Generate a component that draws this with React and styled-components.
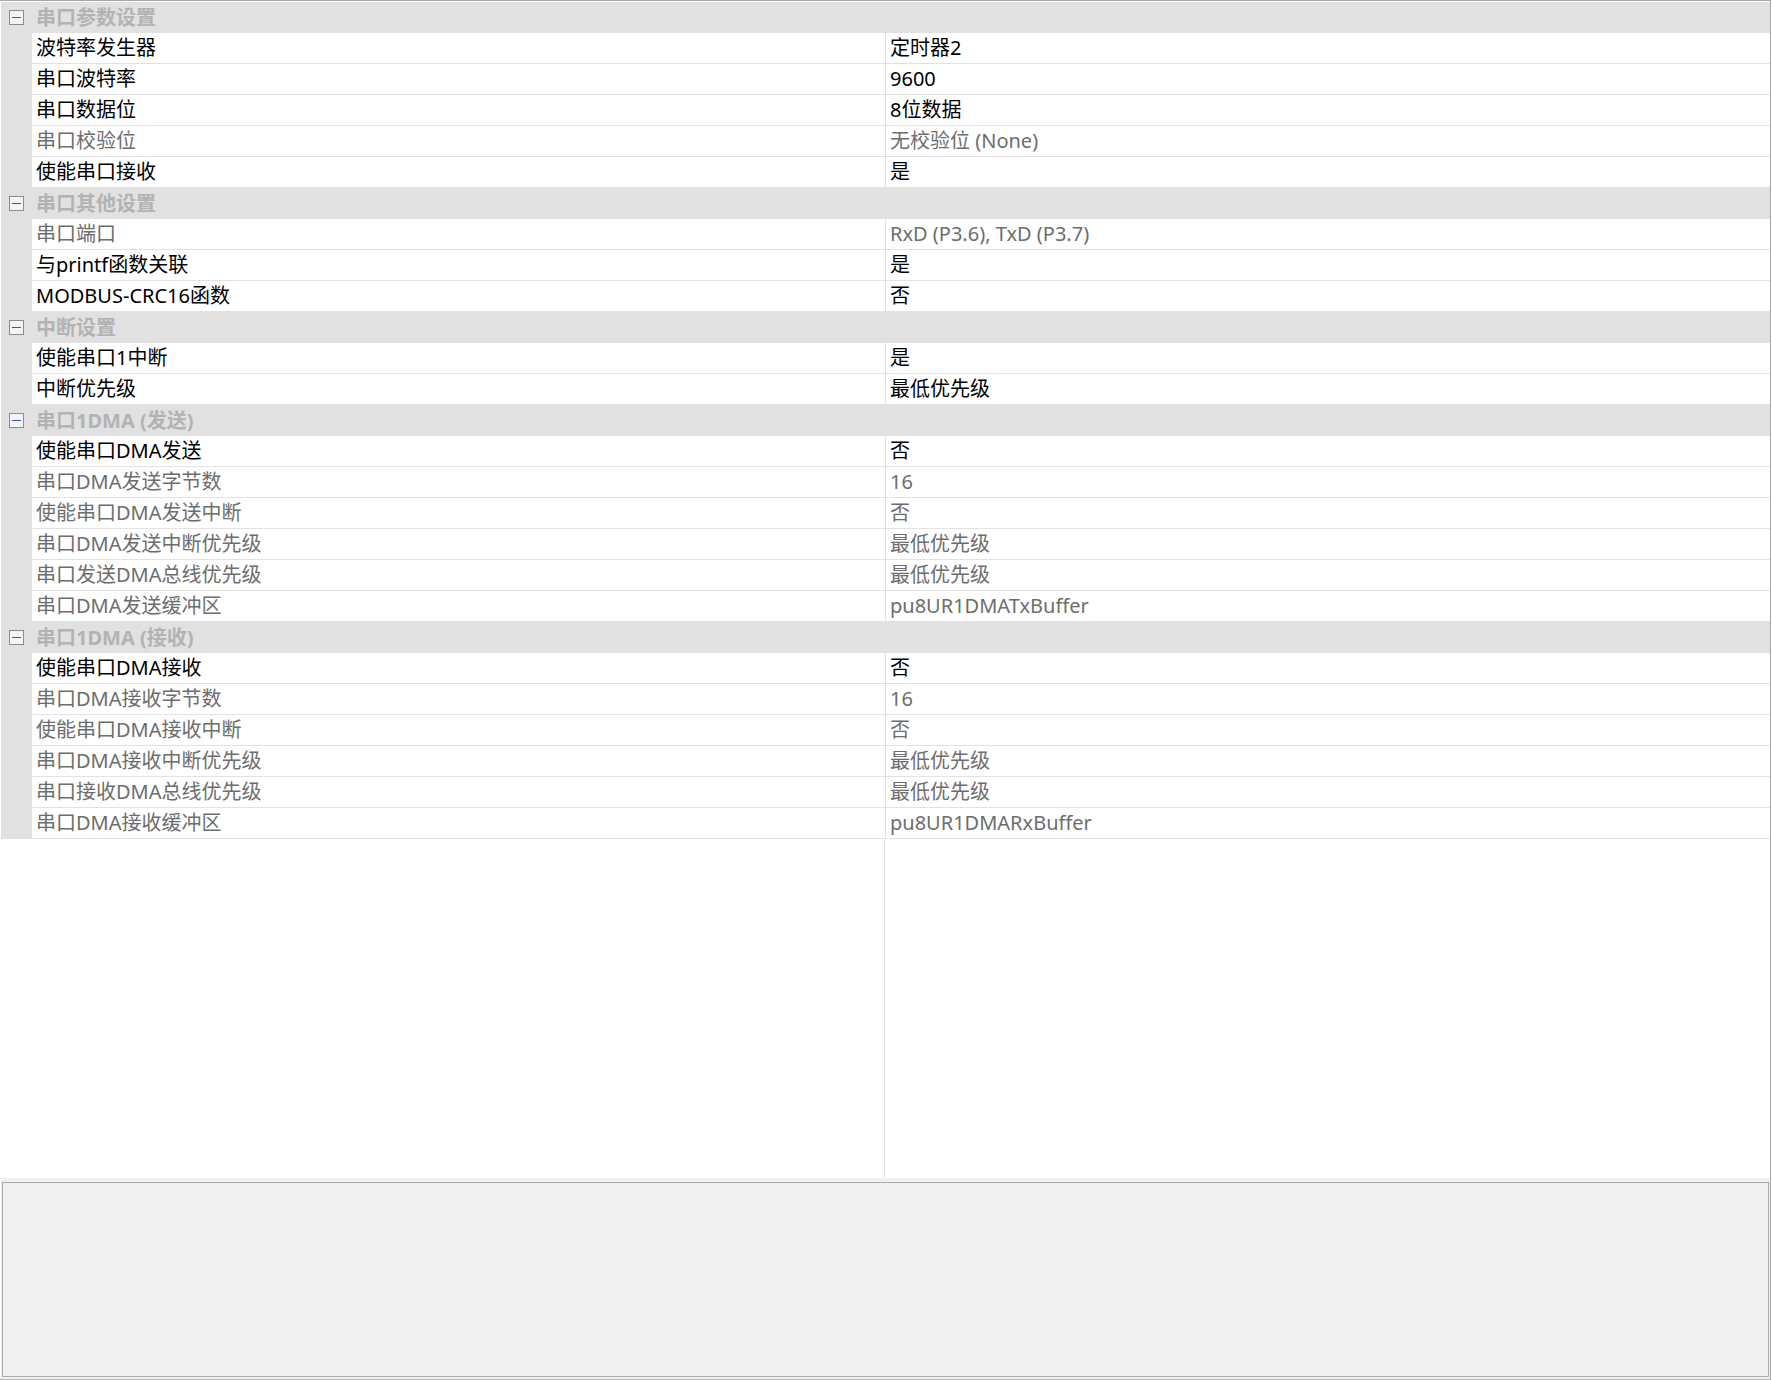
import React from "react"
import styled, { createGlobalStyle } from "styled-components"

const Global = createGlobalStyle`
html, body {
  margin: 0;
  padding: 0;
  background: #ffffff;
}
`

const Frame = styled.div`
width: 1771px;
height: 1380px;
box-sizing: border-box;
border-top: 1px solid #a8a8a8;
border-right: 1px solid #a8a8a8;
border-bottom: 1px solid #b4b4b4;
padding: 1px 0 0 1px;
display: flex;
flex-direction: column;
font-family: "Noto Sans", "Noto Sans CJK SC", sans-serif;
font-size: 20px;
`

const Grid = styled.div`
flex: 1;
display: flex;
flex-direction: column;
`

const GroupRow = styled.div`
height: 31px;
display: flex;
align-items: center;
background: #e1e1e1;
`

const Toggle = styled.span`
width: 15px;
height: 15px;
box-sizing: border-box;
margin: 0 12px 0 8px;
border: 1px solid #8c8c8c;
background: #f4f4f4;
display: flex;
align-items: center;
justify-content: center;
&::after {
  content: "";
  width: 9px;
  height: 1px;
  background: #3c5aa8;
}
`

const GroupTitle = styled.span`
font-weight: bold;
color: #b3b3b3;
line-height: 31px;
`

const Row = styled.div`
height: 31px;
display: grid;
grid-template-columns: 31px 853px 1fr;
`

const Gutter = styled.div`
background: #e1e1e1;
`

const Cell = styled.div`
box-sizing: border-box;
border-bottom: 1px solid #e2e2e2;
border-left: ${p => (p.$divider ? "1px solid #e2e2e2" : "none")};
padding-left: ${p => (p.$divider ? "4px" : "4px")};
color: ${p => (p.$off ? "#6d6d6d" : "#000000")};
line-height: 30px;
white-space: nowrap;
overflow: hidden;
`

const Filler = styled.div`
flex: 1;
display: grid;
grid-template-columns: 884px 1fr;
`

const FillerLeft = styled.div`
border-right: 1px solid #e2e2e2;
`

const InfoArea = styled.div`
height: 201px;
box-sizing: border-box;
background: #f0f0f0;
padding: 4px 1px 2px 1px;
display: flex;
`

const InfoBox = styled.div`
flex: 1;
border: 1px solid #ababab;
background: #f0f0f0;
`

const groups = [
  {
    title: "串口参数设置",
    rows: [
      ["波特率发生器", "定时器2"],
      ["串口波特率", "9600"],
      ["串口数据位", "8位数据"],
      ["串口校验位", "无校验位 (None)", true],
      ["使能串口接收", "是"],
    ],
  },
  {
    title: "串口其他设置",
    rows: [
      ["串口端口", "RxD (P3.6), TxD (P3.7)", true],
      ["与printf函数关联", "是"],
      ["MODBUS-CRC16函数", "否"],
    ],
  },
  {
    title: "中断设置",
    rows: [
      ["使能串口1中断", "是"],
      ["中断优先级", "最低优先级"],
    ],
  },
  {
    title: "串口1DMA (发送)",
    rows: [
      ["使能串口DMA发送", "否"],
      ["串口DMA发送字节数", "16", true],
      ["使能串口DMA发送中断", "否", true],
      ["串口DMA发送中断优先级", "最低优先级", true],
      ["串口发送DMA总线优先级", "最低优先级", true],
      ["串口DMA发送缓冲区", "pu8UR1DMATxBuffer", true],
    ],
  },
  {
    title: "串口1DMA (接收)",
    rows: [
      ["使能串口DMA接收", "否"],
      ["串口DMA接收字节数", "16", true],
      ["使能串口DMA接收中断", "否", true],
      ["串口DMA接收中断优先级", "最低优先级", true],
      ["串口接收DMA总线优先级", "最低优先级", true],
      ["串口DMA接收缓冲区", "pu8UR1DMARxBuffer", true],
    ],
  },
]

const App = () => {
  return (
    <Frame>
      <Global />
      <Grid>
        {groups.map(g => (
          <React.Fragment key={g.title}>
            <GroupRow>
              <Toggle />
              <GroupTitle>{g.title}</GroupTitle>
            </GroupRow>
            {g.rows.map(([name, value, off]) => (
              <Row key={name}>
                <Gutter />
                <Cell $off={off}>{name}</Cell>
                <Cell $off={off} $divider>{value}</Cell>
              </Row>
            ))}
          </React.Fragment>
        ))}
        <Filler>
          <FillerLeft />
          <div />
        </Filler>
      </Grid>
      <InfoArea>
        <InfoBox />
      </InfoArea>
    </Frame>
  )
}

export default App
